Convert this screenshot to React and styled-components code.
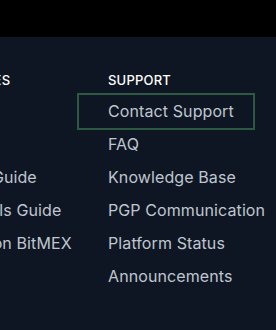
import React from "react";
import styled, {createGlobalStyle} from "styled-components";

const GlobalStyle = createGlobalStyle`
	html, body {
		margin: 0;
		padding: 0;
		background: #0f1623;
		overflow: hidden;
	}
	body {
		font-family: Inter, "Noto Sans", "Liberation Sans", sans-serif;
	}
`;

const TopBar = styled.div`
	height: 37px;
	background: #000;
`;

const Footer = styled.footer`
	background: #0f1623;
	height: 293px;
	padding-top: 35px;
	box-sizing: border-box;
	overflow: hidden;
`;

const Columns = styled.div`
	display: flex;
	margin-left: -70px;
`;

const Column = styled.div`
	display: flex;
	flex-direction: column;
	flex: 0 0 ${(props) => props.width || 174}px;
`;

const Heading = styled.h4`
	margin: 0 0 7px 0;
	font-size: 13px;
	line-height: 16px;
	font-weight: 500;
	color: #ffffff;
	letter-spacing: 0.2px;
	white-space: nowrap;
`;

const Link = styled.a`
	display: block;
	width: 174px;
	box-sizing: border-box;
	margin-left: -29px;
	padding-left: 29px;
	font-size: 16px;
	line-height: 33px;
	letter-spacing: 0.1px;
	color: #bfc6d0;
	text-decoration: none;
	white-space: nowrap;
	outline: ${(props) => (props.focused ? "2px solid #2d5842" : "none")};
`;

const resources = ["Blog", "API", "Futures Guide", "Perpetuals Guide", "Trading on BitMEX"];
const support = [
	"Contact Support",
	"FAQ",
	"Knowledge Base",
	"PGP Communication",
	"Platform Status",
	"Announcements",
];

const App = () => {
	return (
		<>
			<GlobalStyle />
			<TopBar />
			<Footer>
				<Columns>
					<Column width={178}>
						<Heading>RESOURCES</Heading>
						{resources.map((item) => (
							<Link key={item} href="#">
								{item}
							</Link>
						))}
					</Column>
					<Column width={200}>
						<Heading>SUPPORT</Heading>
						{support.map((item, i) => (
							<Link key={item} href="#" focused={i === 0}>
								{item}
							</Link>
						))}
					</Column>
				</Columns>
			</Footer>
		</>
	);
};

export default App;
